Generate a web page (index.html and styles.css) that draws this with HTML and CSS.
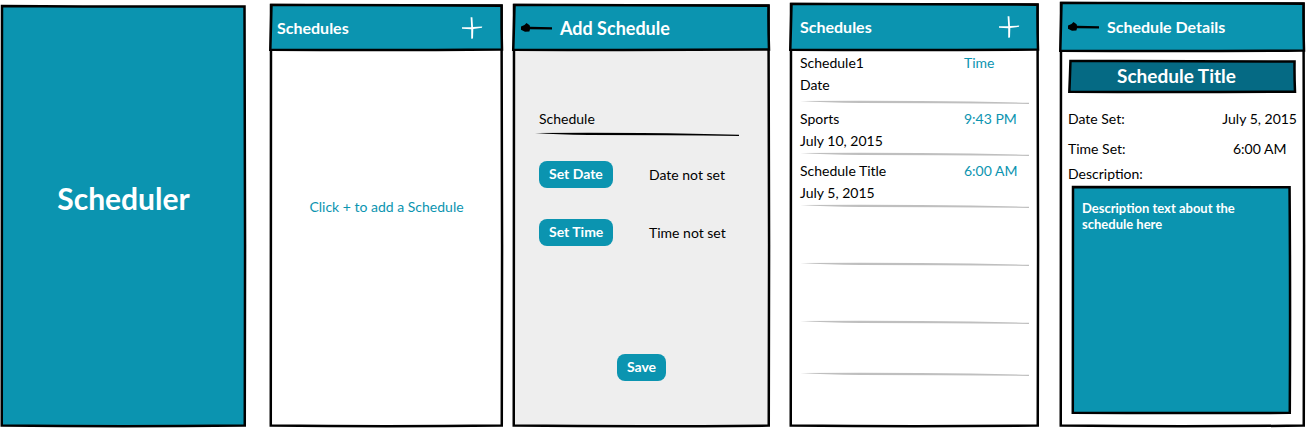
FILE: index.html
```html
<!DOCTYPE html>
<html lang="en">
<head>
<meta charset="utf-8">
<title>Scheduler</title>
<link rel="stylesheet" href="styles.css">
</head>
<body>
<svg class="defs" aria-hidden="true">
  <symbol id="frame" viewBox="0 0 100 100" preserveAspectRatio="none">
    <path d="M0 0 Q50 0.2 99.8 0.1 Q100.2 50 99.9 99.9 Q50 100.2 -0.1 99.9 Q-0.1 70 0 0Z" stroke-width="2.5" vector-effect="non-scaling-stroke"/>
  </symbol>
  <symbol id="bar" viewBox="0 0 100 100" preserveAspectRatio="none">
    <path d="M0.2 0 Q50 -0.5 99.8 1.5 Q99.7 50 100 99 Q50 101 -0.3 99.5 Q0 50 0.2 0Z" stroke-width="2.5" vector-effect="non-scaling-stroke"/>
  </symbol>
  <symbol id="rule" viewBox="0 0 229 4" preserveAspectRatio="none">
    <path d="M0 1 Q60 0.4 120 1 Q180 1.4 229 2.8 L229 4 Q150 3 60 3 Q25 2.6 0 1Z"/>
  </symbol>
  <symbol id="plus" viewBox="0 0 22 24">
    <path d="M9.6 1.2 L11.4 1.2 L12 10.9 L21.2 10.6 L21 11.8 L12.3 13 L12 22.5 L10.2 22.8 L10.2 13.2 L1 12.8 L1 11.2 L10.2 11.3Z"/>
  </symbol>
  <symbol id="back" viewBox="0 0 33 12">
    <path d="M1 4.5 L4.5 3 L6.5 1 L9.6 3.2 L10 4.8 L32 5.2 L32 7.4 L10 7.2 L9.4 9.6 L5 9.8 L1 7.8Z"/>
  </symbol>
</svg>
<main class="board">
  <section class="screen splash">
    <svg class="sketch" aria-hidden="true"><use href="#frame"/></svg>
    <h1 class="brand">Scheduler</h1>
  </section>

  <section class="screen empty">
    <svg class="sketch" aria-hidden="true"><use href="#frame"/></svg>
    <header class="bar">
      <svg class="sketch" aria-hidden="true"><use href="#bar"/></svg>
      <h2 class="bar-title">Schedules</h2>
      <button class="icon-button" aria-label="Add schedule"><svg class="plus"><use href="#plus"/></svg></button>
    </header>
    <p class="hint">Click + to add a Schedule</p>
  </section>

  <section class="screen add">
    <svg class="sketch" aria-hidden="true"><use href="#frame"/></svg>
    <header class="bar bar-back">
      <svg class="sketch" aria-hidden="true"><use href="#bar"/></svg>
      <button class="icon-button" aria-label="Back"><svg class="back"><use href="#back"/></svg></button>
      <h2 class="bar-title">Add Schedule</h2>
    </header>
    <form class="form">
      <div class="field">
        <input class="name" type="text" value="Schedule" aria-label="Schedule name">
        <svg class="rule" aria-hidden="true"><use href="#rule"/></svg>
      </div>
      <div class="setting"><button class="button" type="button">Set Date</button><span>Date not set</span></div>
      <div class="setting"><button class="button" type="button">Set Time</button><span>Time not set</span></div>
      <button class="button save" type="button">Save</button>
    </form>
  </section>

  <section class="screen list">
    <svg class="sketch" aria-hidden="true"><use href="#frame"/></svg>
    <header class="bar">
      <svg class="sketch" aria-hidden="true"><use href="#bar"/></svg>
      <h2 class="bar-title">Schedules</h2>
      <button class="icon-button" aria-label="Add schedule"><svg class="plus"><use href="#plus"/></svg></button>
    </header>
    <ul class="rows">
      <li class="row"><div class="entry"><span>Schedule1</span><span>Date</span></div><span class="time">Time</span><svg class="rule" aria-hidden="true"><use href="#rule"/></svg></li>
      <li class="row"><div class="entry"><span>Sports</span><span>July 10, 2015</span></div><span class="time">9:43 PM</span><svg class="rule" aria-hidden="true"><use href="#rule"/></svg></li>
      <li class="row"><div class="entry"><span>Schedule Title</span><span>July 5, 2015</span></div><span class="time">6:00 AM</span><svg class="rule" aria-hidden="true"><use href="#rule"/></svg></li>
      <li class="row tall"><svg class="rule" aria-hidden="true"><use href="#rule"/></svg></li>
      <li class="row tall"><svg class="rule" aria-hidden="true"><use href="#rule"/></svg></li>
      <li class="row"><svg class="rule" aria-hidden="true"><use href="#rule"/></svg></li>
    </ul>
  </section>

  <section class="screen details">
    <svg class="sketch" aria-hidden="true"><use href="#frame"/></svg>
    <header class="bar bar-back">
      <svg class="sketch" aria-hidden="true"><use href="#bar"/></svg>
      <button class="icon-button" aria-label="Back"><svg class="back"><use href="#back"/></svg></button>
      <h2 class="bar-title">Schedule Details</h2>
    </header>
    <div class="details-body">
      <div class="title-box">
        <svg class="sketch" aria-hidden="true"><use href="#bar"/></svg>
        <h3 class="title">Schedule Title</h3>
      </div>
      <dl class="facts">
        <dt>Date Set:</dt><dd>July 5, 2015</dd>
        <dt>Time Set:</dt><dd>6:00 AM</dd>
      </dl>
      <h4 class="label">Description:</h4>
      <div class="description">
        <svg class="sketch" aria-hidden="true"><use href="#frame"/></svg>
        <p class="description-text">Description text about the schedule here</p>
      </div>
    </div>
  </section>
</main>
</body>
</html>
```
FILE: styles.css
```css
* { box-sizing: border-box; }

body {
  margin: 0;
  background: #fff;
  color: #000;
  font: 14px/22px Lato, "Liberation Sans", sans-serif;
}

h1, h2, h3, h4, p, ul, dl, dd { margin: 0; padding: 0; }

button, input { font: inherit; border: 0; padding: 0; }

.defs { position: absolute; width: 0; height: 0; }

.board { display: flex; min-height: 100vh; }

.screen {
  position: relative;
  isolation: isolate;
  display: flex;
  flex-direction: column;
  min-width: 0;
}

.splash { flex: 247 1 0; margin-top: 4px; }
.empty { flex: 235 1 0; margin: 3px 0 0 22px; }
.add { flex: 259 1 0; margin: 3px 0 0 8px; }
.list { flex: 251 1 0; margin: 2px 0 0 18px; }
.details { flex: 247 1 0; margin: 1px 0 0 19px; }

/* Hand-drawn outline behind a box */
.sketch {
  position: absolute;
  z-index: -1;
  inset: 2px;
  width: calc(100% - 4px);
  height: calc(100% - 4px);
  overflow: visible;
  fill: #fff;
  stroke: #000;
}
.sketch use, symbol { overflow: visible; }
.splash > .sketch, .bar > .sketch, .description > .sketch { fill: #0b94b0; }
.add > .sketch { fill: #eee; }
.title-box > .sketch { fill: #056a84; }

.brand {
  margin: auto;
  padding-bottom: 36px;
  color: #fff;
  font-size: 30px;
  line-height: 36px;
}

.bar {
  position: relative;
  isolation: isolate;
  display: flex;
  align-items: center;
  justify-content: space-between;
  height: 49px;
  padding: 0 21px 0 8px;
  color: #fff;
}
.bar-back { justify-content: flex-start; gap: 7px; }
.bar-title { font-size: 16px; line-height: 24px; }
.add .bar-title { font-size: 18px; }
.list .bar { height: 50px; padding: 0 20px 0 11px; }
.details .bar { height: 52px; }

.icon-button { display: flex; background: none; }
.plus { width: 22px; height: 24px; fill: #fff; }
.back { width: 33px; height: 12px; fill: #000; }

.hint {
  margin: auto;
  padding-bottom: 66px;
  color: #0b94b0;
}

.form {
  display: flex;
  flex: 1;
  flex-direction: column;
  padding: 56px 27px 47px;
}
.field {
  display: flex;
  flex-direction: column;
  margin: 0 5px 0 -4px;
  padding-bottom: 25px;
}
.name { width: 100%; padding-left: 4px; background: none; line-height: 22px; }
.field .rule { margin-top: 2px; }
.setting {
  display: grid;
  grid-template-columns: 110px 1fr;
  align-items: center;
  margin-bottom: 31px;
}
.button {
  justify-self: start;
  padding: 0 10px 2px;
  border-radius: 8px;
  background: #0b94b0;
  color: #fff;
  font-weight: 700;
  line-height: 25px;
}
.save { align-self: center; margin-top: auto; }

.rule { display: block; width: 100%; height: 4px; }

.rows { list-style: none; padding: 0 11px; }
.row {
  display: grid;
  grid-template: 1fr 4px / 1fr 65px;
  height: 52px;
  padding-top: 4px;
}
.row:first-child { padding-top: 0; }
.tall { height: 58px; }
.row .rule { grid-area: 2 / 1 / 3 / 3; fill: #bfbfbf; }
.entry { display: flex; flex-direction: column; height: 44px; }
.time { color: #0b94b0; }

.details-body {
  display: flex;
  flex: 1;
  flex-direction: column;
  padding: 6px 9px 13px;
}
.title-box {
  position: relative;
  isolation: isolate;
  padding: 5px 12px 6px 0;
  color: #fff;
  text-align: center;
}
.title { font-size: 19px; line-height: 24px; }
.facts {
  display: grid;
  grid-template-columns: 1fr auto;
  row-gap: 8px;
  padding: 14px 0 3px;
}
.facts dd { text-align: center; }
.label { font-size: 14px; font-weight: 400; }
.description {
  position: relative;
  isolation: isolate;
  flex: 1;
  margin: 0 5px 0 3px;
  padding: 15px 40px 16px 11px;
  color: #fff;
}
.description-text { font-size: 13px; font-weight: 700; line-height: 16px; }
```
